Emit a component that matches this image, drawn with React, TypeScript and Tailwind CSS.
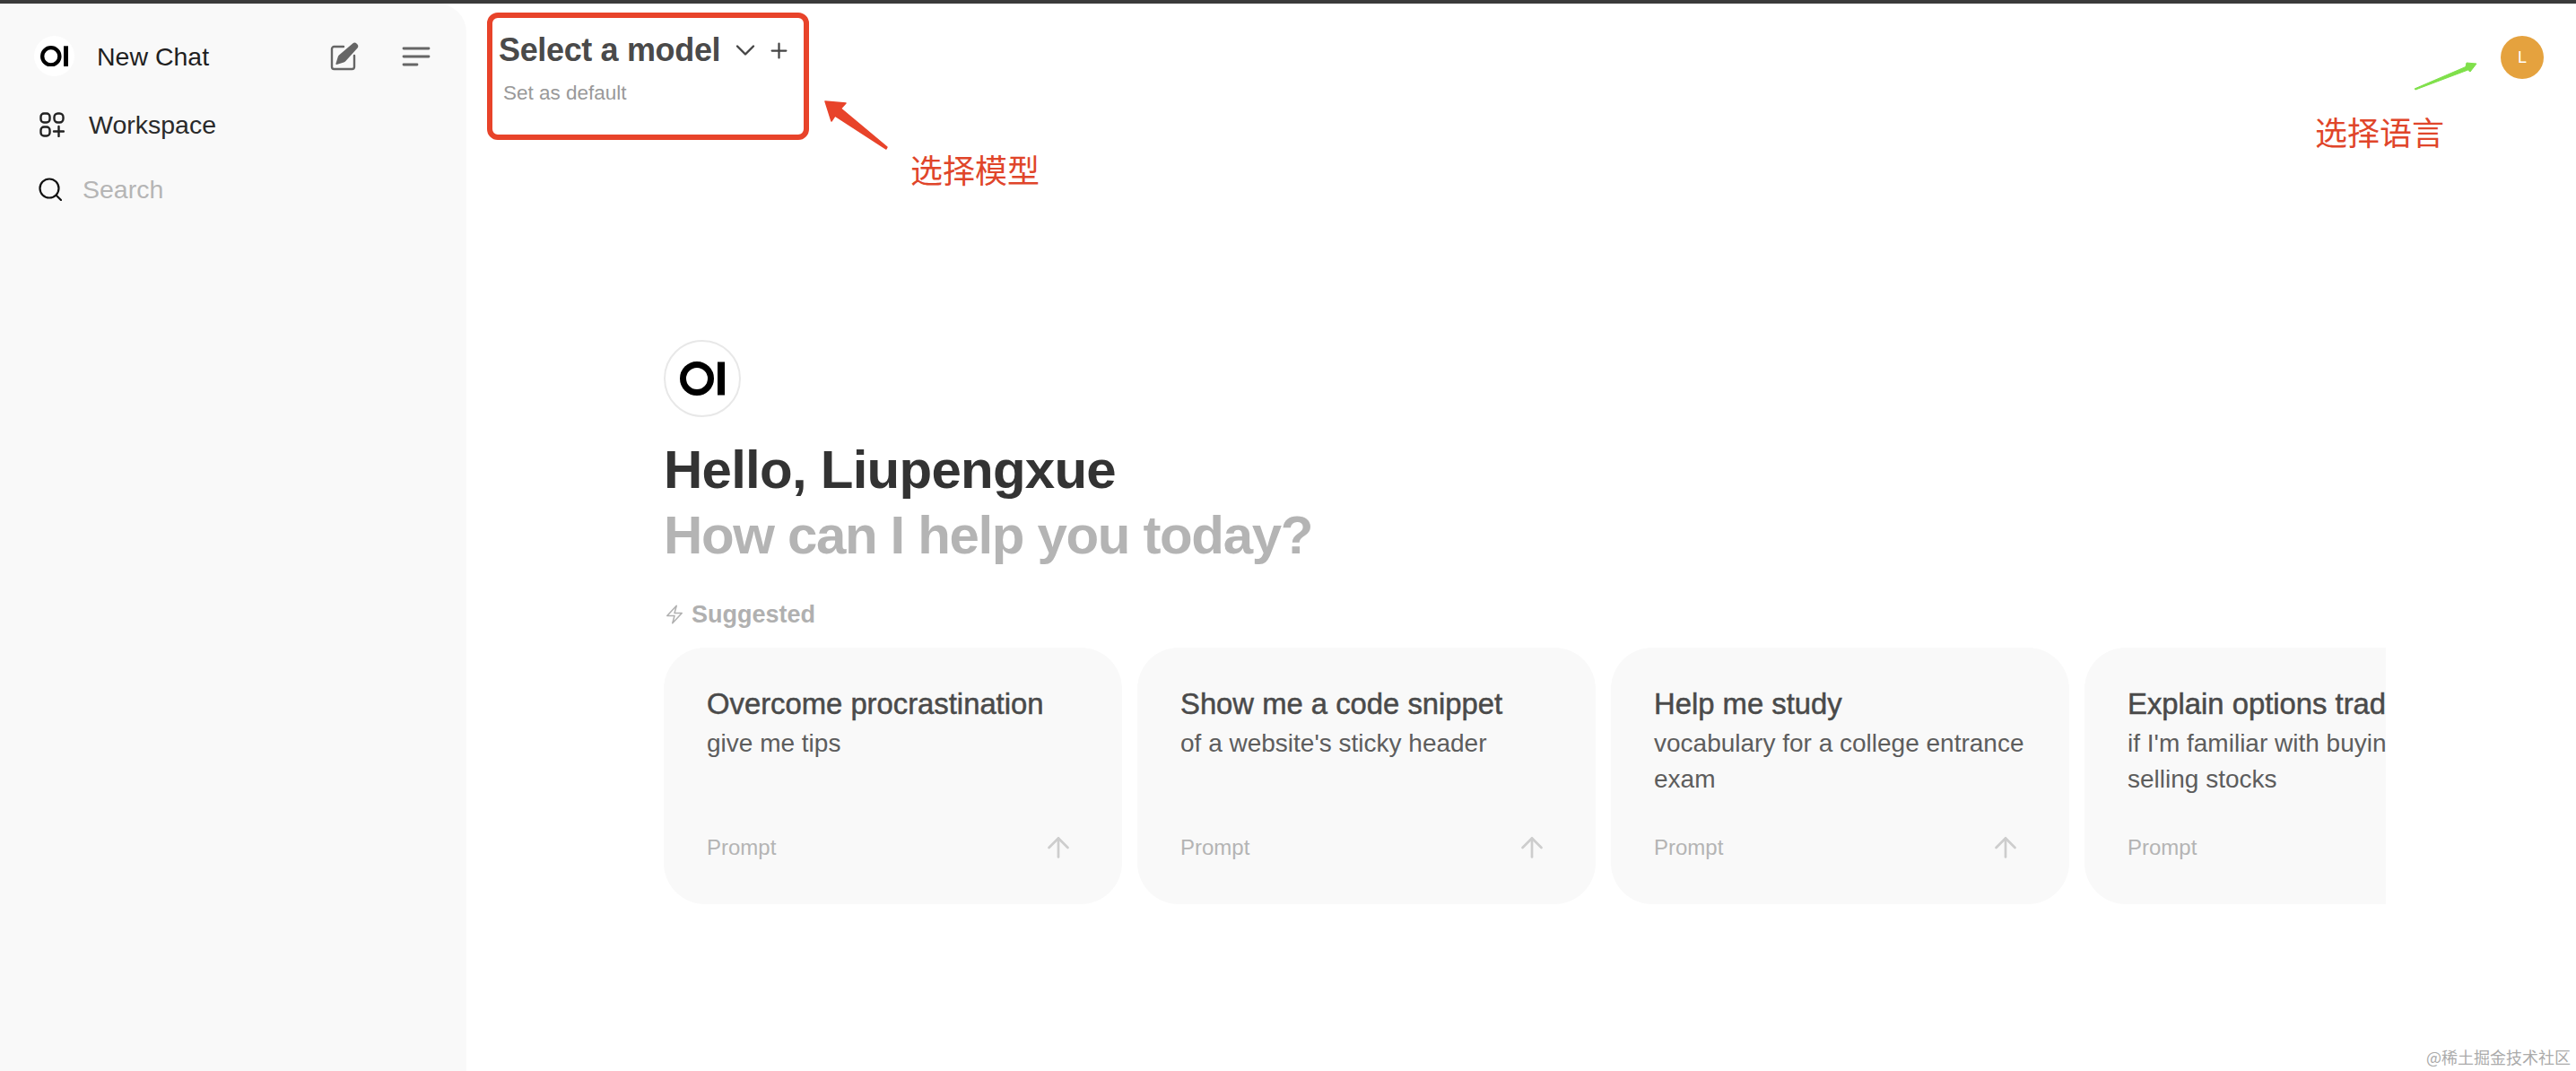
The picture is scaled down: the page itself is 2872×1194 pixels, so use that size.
import { ArrowUp, ChevronDown, Plus } from 'lucide-react'
import { HiOutlineBolt } from 'react-icons/hi2'

const prompts = [
  { title: 'Overcome procrastination', sub: 'give me tips' },
  { title: 'Show me a code snippet', sub: "of a website's sticky header" },
  { title: 'Help me study', sub: 'vocabulary for a college entrance exam' },
  { title: 'Explain options trading', sub: "if I'm familiar with buying and selling stocks" },
]

function Logo({ className }: { className: string }) {
  return (
    <svg viewBox="0 0 50 38" className={className} fill="none">
      <circle cx="19" cy="19" r="15.500" stroke="#000" strokeWidth="7" />
      <rect x="42" y="0.500" width="8" height="37" fill="#000" />
    </svg>
  )
}

function EditIcon() {
  return (
    <svg viewBox="0 0 32 32" className="h-[32px] w-[32px]" fill="none">
      <path d="M15 5H4.500A2.500 2.500 0 0 0 2 7.500v20A2.500 2.500 0 0 0 4.500 30h20a2.500 2.500 0 0 0 2.500-2.500V15" stroke="#666" strokeWidth="2.400" strokeLinecap="round" />
      <path d="M25.500 1.200c1.200-1 2.900-.9 4 .2l1 1c1.100 1.100 1.100 2.900.1 4L17 21.500c-.5.500-1 .8-1.700 1l-8 2.500c-.6.200-1.100-.3-.9-.9l2.500-8c.2-.7.500-1.200 1-1.700Z" fill="#666" />
    </svg>
  )
}

function MenuIcon() {
  return (
    <svg viewBox="0 0 32 24" className="h-[24px] w-[32px]" fill="none" stroke="#666" strokeWidth="2.800" strokeLinecap="round">
      <path d="M2 3h28" />
      <path d="M2 12h28" />
      <path d="M2 21h15" />
    </svg>
  )
}

function WorkspaceIcon() {
  return (
    <svg viewBox="0 0 28 28" className="h-[28px] w-[28px]" fill="none" stroke="#222" strokeWidth="2.400" strokeLinecap="round">
      <rect x="1.500" y="1.500" width="10" height="10" rx="3.500" />
      <rect x="16.500" y="1.500" width="10" height="10" rx="4" />
      <rect x="1.500" y="16.500" width="10" height="10" rx="3.500" />
      <path d="M21.500 16v11M16 21.500h11" />
    </svg>
  )
}

function SearchIcon() {
  return (
    <svg viewBox="0 0 26 26" className="h-[26px] w-[26px]" fill="none" stroke="#111" strokeWidth="2.200" strokeLinecap="round">
      <circle cx="12" cy="12" r="10.500" />
      <path d="M20 20l5 5" />
    </svg>
  )
}

function PromptCard({ title, sub }: { title: string; sub: string }) {
  return (
    <div className="flex h-[286px] w-[511px] shrink-0 flex-col justify-between rounded-[46px] bg-[#f9f9f9] px-[48px] pb-[43px] pt-[43px]">
      <div>
        <div className="whitespace-nowrap text-[32.8px] font-medium leading-[40px] text-[#4a4a4a] [-webkit-text-stroke:0.5px_#4a4a4a]">{title}</div>
        <div className="mt-[4px] text-[28px] leading-[40px] text-[#5d5d5d]">{sub}</div>
      </div>
      <div className="flex items-center justify-between text-[#b4b4b4]">
        <span className="text-[24px] leading-[40px]">Prompt</span>
        <ArrowUp className="mr-[5px] h-[36px] w-[36px] text-[#cdcdcd]" strokeWidth={1.8} />
      </div>
    </div>
  )
}

export default function App() {
  return (
    <div className="relative flex h-[1194px] w-full flex-col overflow-hidden bg-white font-['Liberation_Sans','Noto_Sans_CJK_SC',sans-serif]">
      <div className="h-[4px] shrink-0 bg-[#3b3b3b]" />
      <div className="flex min-h-0 flex-1">
        <aside className="flex w-[520px] shrink-0 flex-col rounded-tr-[32px] bg-[#f9f9f9]">
          <div className="mt-[36px] flex h-[45px] items-center pl-[38px] pr-[40px]">
            <div className="flex h-[45px] w-[45px] items-center justify-center rounded-full bg-white">
              <Logo className="w-[31px]" />
            </div>
            <span className="ml-[25px] flex-1 pt-[2px] text-[28.5px] text-[#1f1f1f]">New Chat</span>
            <EditIcon />
            <div className="ml-[48px]">
              <MenuIcon />
            </div>
          </div>
          <div className="mt-[38px] flex h-[32px] items-center pl-[44px]">
            <WorkspaceIcon />
            <span className="ml-[27px] text-[28.5px] text-[#2a2a2a]">Workspace</span>
          </div>
          <div className="mt-[40px] flex h-[32px] items-center pl-[43px]">
            <SearchIcon />
            <span className="ml-[23px] text-[28.5px] text-[#b5b5b5]">Search</span>
          </div>
        </aside>

        <main className="min-w-0 flex-1">
          <div className="flex items-start justify-between">
            <div className="pl-[36px] pt-[32px]">
              <div className="flex h-[40px] items-center">
                <span className="text-[36px] font-bold leading-[40px] tracking-[-0.35px] text-[#4a4a4a]">Select a model</span>
                <ChevronDown className="ml-[10px] h-[36px] w-[36px] text-[#444]" strokeWidth={1.600} />
                <Plus className="ml-[6px] h-[27px] w-[27px] text-[#444]" strokeWidth={2} />
              </div>
              <div className="ml-[5px] mt-[14px] text-[22.5px] leading-[28px] text-[#999]">Set as default</div>
            </div>
            <div className="mr-[36px] mt-[36px] flex h-[48px] w-[48px] items-center justify-center rounded-full bg-[#e5a23e] text-[18px] text-white">
              L
            </div>
          </div>

          <div className="ml-[220px] mr-[212px] mt-[261px]">
            <div className="flex h-[86px] w-[86px] items-center justify-center rounded-full border-2 border-[#e8e8e8]">
              <Logo className="w-[50px]" />
            </div>
            <div className="mt-[23px] text-[60px] font-bold leading-[72px] tracking-[-0.75px] text-[#333]">Hello, Liupengxue</div>
            <div className="mt-[1px] text-[60px] font-bold leading-[72px] tracking-[-1.35px] text-[#b4b4b4]">How can I help you today?</div>
            <div className="mt-[34px] flex h-[36px] items-center text-[#b0b0b0]">
              <HiOutlineBolt className="h-[24px] w-[24px]" />
              <span className="ml-[7px] text-[27px] font-bold leading-[36px]">Suggested</span>
            </div>
            <div className="mt-[19px] flex gap-[17px] overflow-hidden">
              {prompts.map((p) => (
                <PromptCard key={p.title} title={p.title} sub={p.sub} />
              ))}
            </div>
          </div>
        </main>
      </div>

      {/* annotations painted over the screenshot */}
      <div className="absolute left-[543px] top-[14px] h-[142px] w-[359px] rounded-[12px] border-[6px] border-[#e8432a]" />
      <svg className="absolute left-[910px] top-[105px] h-[65px] w-[85px]" viewBox="0 0 85 65">
        <path d="M10 8L33 10L27.500 16L79 59L78 61L21 24L17 30Z" fill="#e8432a" stroke="#e8432a" strokeWidth="1.500" strokeLinejoin="round" />
      </svg>
      <span className="absolute left-[1015px] top-[169px] text-[36px] leading-[46px] text-[#e0452a]">选择模型</span>

      <svg className="absolute left-[2688px] top-[62px] h-[42px] w-[78px]" viewBox="0 0 78 42">
        <path d="M4 37L61 12.500L62 8L73 9L66 18L63.500 16L5 38Z" fill="#7fe04a" stroke="#7fe04a" strokeLinejoin="round" />
      </svg>
      <span className="absolute left-[2581px] top-[127px] text-[36px] leading-[46px] text-[#e0452a]">选择语言</span>

      <span className="absolute bottom-[4px] right-[6px] font-['Noto_Sans_CJK_SC',sans-serif] text-[18px] leading-[24px] text-[#ababab]">@稀土掘金技术社区</span>
    </div>
  )
}
